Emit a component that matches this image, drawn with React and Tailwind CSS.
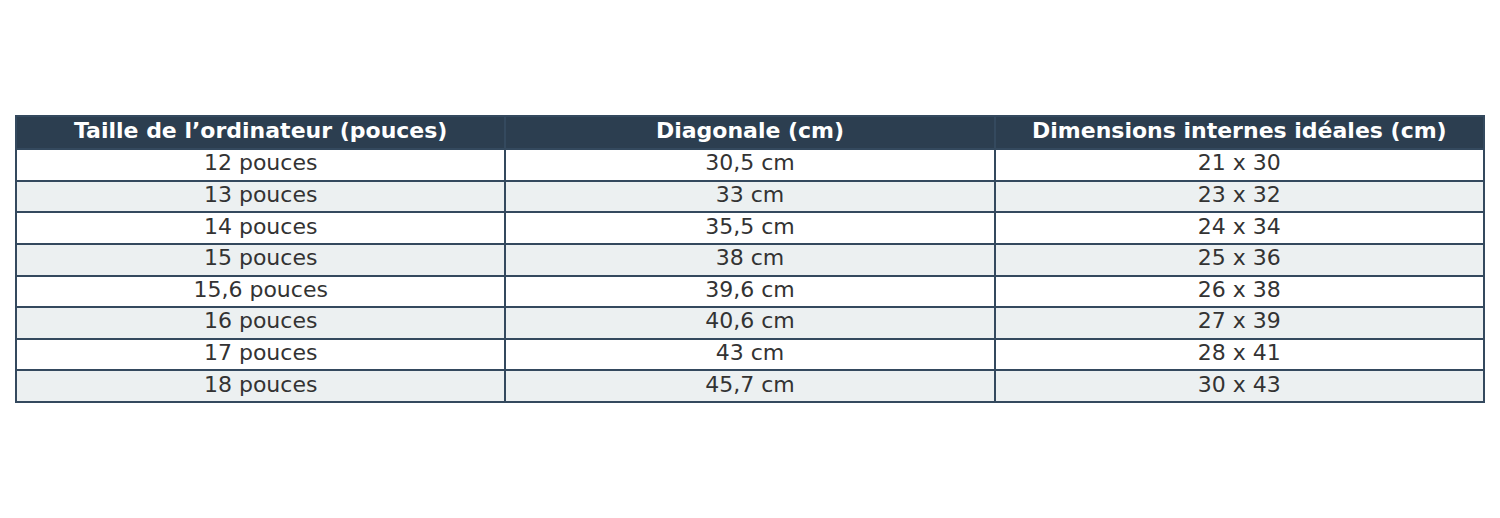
export default function App() {
  const rows = [
    ["12 pouces", "30,5 cm", "21 x 30"],
    ["13 pouces", "33 cm", "23 x 32"],
    ["14 pouces", "35,5 cm", "24 x 34"],
    ["15 pouces", "38 cm", "25 x 36"],
    ["15,6 pouces", "39,6 cm", "26 x 38"],
    ["16 pouces", "40,6 cm", "27 x 39"],
    ["17 pouces", "43 cm", "28 x 41"],
    ["18 pouces", "45,7 cm", "30 x 43"],
  ];
  return (
    <div
      className="w-[1500px] h-[518px] bg-white flex items-center px-[15px]"
      style={{ fontFamily: '"DejaVu Sans", sans-serif' }}
    >
      <table className="w-full border-collapse table-fixed border-2 border-[#34495e] text-[22px] leading-none">
        <thead>
          <tr className="bg-[#2c3e50] h-[33px]">
            {["Taille de l\u2019ordinateur (pouces)", "Diagonale (cm)", "Dimensions internes id\u00e9ales (cm)"].map((h, i) => (
              <th key={i} className="border-2 border-[#34495e] text-white font-bold text-center p-0 pb-[3px]">
                {h}
              </th>
            ))}
          </tr>
        </thead>
        <tbody>
          {rows.map((r, i) => (
            <tr key={i} className={i % 2 === 0 ? "bg-white h-[31.6px]" : "bg-[#ecf0f1] h-[31.6px]"}>
              {r.map((c, j) => (
                <td key={j} className="border-2 border-[#34495e] text-[#333333] text-center p-0 pb-[3px]">
                  {c}
                </td>
              ))}
            </tr>
          ))}
        </tbody>
      </table>
    </div>
  );
}
